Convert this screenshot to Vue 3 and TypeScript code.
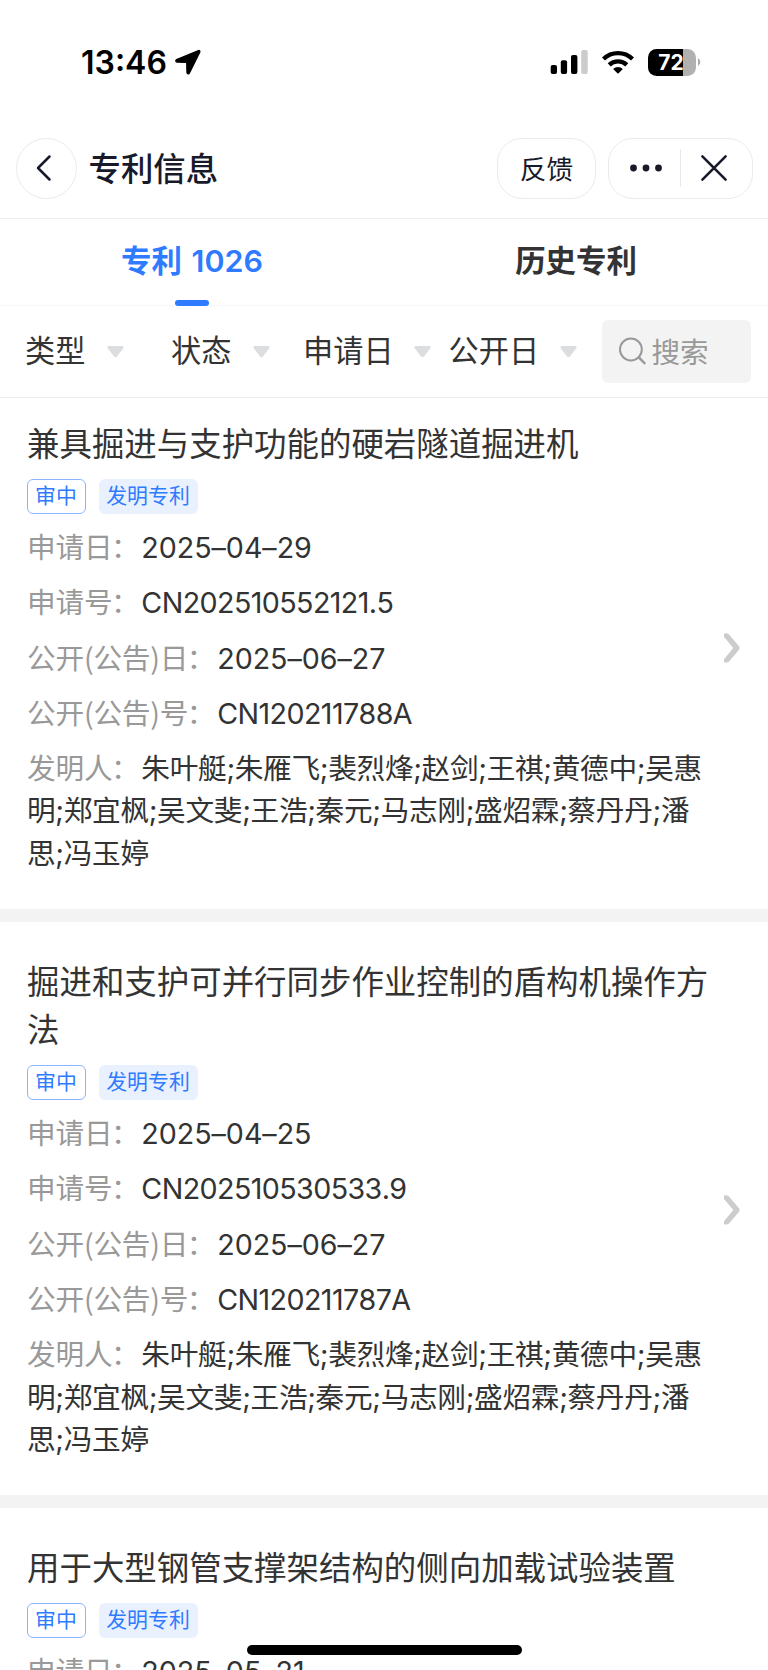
<script setup lang="ts">
interface Field {
  label: string
  value: string
  date?: boolean
}

interface Patent {
  title: string
  status: string
  kind: string
  fields: Field[]
  inventors: string[]
}

const inventors: string[] = [
  '朱叶艇', '朱雁飞', '裴烈烽', '赵剑', '王祺', '黄德中', '吴惠明', '郑宜枫', '吴文斐',
  '王浩', '秦元', '马志刚', '盛炤霖', '蔡丹丹', '潘思', '冯玉婷',
]

const filters: string[] = ['类型', '状态', '申请日', '公开日']

const patents: Patent[] = [
  {
    title: '兼具掘进与支护功能的硬岩隧道掘进机',
    status: '审中',
    kind: '发明专利',
    fields: [
      { label: '申请日', value: '2025–04–29', date: true },
      { label: '申请号', value: 'CN202510552121.5' },
      { label: '公开(公告)日', value: '2025–06–27', date: true },
      { label: '公开(公告)号', value: 'CN120211788A' },
    ],
    inventors,
  },
  {
    title: '掘进和支护可并行同步作业控制的盾构机操作方法',
    status: '审中',
    kind: '发明专利',
    fields: [
      { label: '申请日', value: '2025–04–25', date: true },
      { label: '申请号', value: 'CN202510530533.9' },
      { label: '公开(公告)日', value: '2025–06–27', date: true },
      { label: '公开(公告)号', value: 'CN120211787A' },
    ],
    inventors,
  },
  {
    title: '用于大型钢管支撑架结构的侧向加载试验装置',
    status: '审中',
    kind: '发明专利',
    fields: [{ label: '申请日', value: '2025–05–21', date: true }],
    inventors: [],
  },
]
</script>

<template>
  <div class="screen">
    <div class="status-bar">
      <span class="time">13:46</span>
      <svg class="location" width="27" height="27" viewBox="0 0 27 27">
        <path d="M24.600 1.600 2.600 10.600c-1.200.6-1 2.400.4 2.400l9 .2c.6 0 .8.200.8.800l.2 9.500c0 1.400 1.800 1.700 2.400.400L25.700 3.200c.4-1-.2-1.900-1.100-1.600Z" fill="#000" stroke="#000" stroke-width="1.400" stroke-linejoin="round" />
      </svg>
      <div class="indicators">
        <svg class="signal" width="38" height="24" viewBox="0 0 38 24">
          <rect x="0.700" y="15" width="6.300" height="9" rx="1.900" />
          <rect x="10.800" y="10.300" width="6.300" height="13.700" rx="1.900" />
          <rect x="21" y="5" width="6.400" height="19" rx="1.900" />
          <rect x="31.200" y="0" width="6.500" height="24" rx="1.900" fill="#ccc" />
        </svg>
        <svg class="wifi" width="32" height="24" viewBox="0 0 32 24">
          <g fill="none" stroke="#000" stroke-width="4.300">
            <path d="M1.500 9A20.800 20.800 0 0 1 30.500 9" />
            <path d="M7.200 14.900a12.700 12.700 0 0 1 17.600 0" />
          </g>
          <path d="M11.100 18.900a7.200 7.200 0 0 1 9.800 0L16.600 23.200q-.6.600-1.200 0Z" />
        </svg>
        <div class="battery"><span>72</span></div>
        <svg class="nub" width="3" height="8" viewBox="0 0 3 8"><path d="M0 0a4.600 4.600 0 0 1 0 8Z" fill="#aaa" /></svg>
      </div>
    </div>

    <header class="nav">
      <button class="back" aria-label="返回">
        <svg width="20" height="30" viewBox="0 0 20 30">
          <path d="M15.500 3.500 4 15l11.500 11.500" fill="none" stroke="#171a2b" stroke-width="2.500" stroke-linecap="round" stroke-linejoin="round" />
        </svg>
      </button>
      <h1>专利信息</h1>
      <button class="feedback">反馈</button>
      <div class="capsule">
        <svg class="dots" width="34" height="8" viewBox="0 0 34 8" fill="#171a2b">
          <circle cx="4.500" cy="4" r="3.400" /><circle cx="17" cy="4" r="3.400" /><circle cx="29.500" cy="4" r="3.400" />
        </svg>
        <i class="split"></i>
        <svg class="close" width="28" height="28" viewBox="0 0 28 28">
          <path d="M2.400 2.400 25.600 25.600M25.600 2.400 2.400 25.600" stroke="#171a2b" stroke-width="2.600" stroke-linecap="round" />
        </svg>
      </div>
    </header>

    <nav class="tabs">
      <a class="tab active">专利 1026</a>
      <a class="tab">历史专利</a>
    </nav>

    <div class="filters">
      <div v-for="name in filters" :key="name" class="filter">
        <span>{{ name }}</span>
        <svg width="17" height="12" viewBox="0 0 17 12">
          <path d="M1.500 0h14q1.600.4 1 1.900L10 10.400q-1.500 1.500-3 0L.5 1.900Q-.1.400 1.500 0Z" fill="#dcdddf" />
        </svg>
      </div>
      <div class="search">
        <svg width="28" height="28" viewBox="0 0 28 28" fill="none" stroke="#999" stroke-width="2">
          <circle cx="12.900" cy="12.500" r="10.900" />
          <path d="m20.600 20.200 6.600 6.600" stroke-width="2.400" />
        </svg>
        <span>搜索</span>
      </div>
    </div>

    <main class="list">
      <article v-for="p in patents" :key="p.title" class="card">
        <div class="body">
          <h2>{{ p.title }}</h2>
          <div class="tags">
            <span class="tag outline">{{ p.status }}</span>
            <span class="tag solid">{{ p.kind }}</span>
          </div>
          <p v-for="f in p.fields" :key="f.label" class="row"><span class="label">{{ f.label }}<span class="colon">：</span></span><span class="value" :class="{ date: f.date }">{{ f.value }}</span></p>
          <p v-if="p.inventors.length" class="row people"><span class="label">发明人<span class="colon">：</span></span>{{ p.inventors.join(';') }}</p>
        </div>
        <svg v-if="p.inventors.length" class="chevron" width="16" height="30" viewBox="0 0 16 30">
          <path d="M0 .6Q3-.4 5 1.600L15 13.300q1.300 1.700 0 3.400L5 28.400Q3.500 30 0 29.300v-3L9.300 15 0 4Z" fill="#ccc" />
        </svg>
      </article>
    </main>
    <div class="home-indicator"></div>
  </div>
</template>

<style>
body {
  margin: 0;
  background: #fff;
}
</style>

<style scoped>
.screen {
  position: relative;
  width: 768px;
  height: 1670px;
  overflow: hidden;
  background: #fff;
  color: #333;
  font-family: Inter, "Noto Sans CJK SC", sans-serif;
}
.status-bar {
  display: flex;
  height: 125px;
  box-sizing: border-box;
  padding: 42px 67px 0 81px;
  align-items: flex-start;
}
.time {
  width: 93px;
  color: #000;
  font-size: 32px;
  font-weight: 600;
  line-height: 42px;
}
.location {
  margin-top: 7px;
}
.indicators {
  display: flex;
  flex: 1;
  justify-content: flex-end;
  padding-top: 7px;
}
.signal {
  margin: 1px 14px 0 0;
}
.wifi {
  margin: 1px 14px 0 0;
}
.battery {
  width: 48px;
  height: 26.500px;
  border-radius: 8.500px;
  background: linear-gradient(90deg, #000 35px, #b1b1b1 35px);
  color: #fff;
  font-size: 21px;
  font-weight: 700;
  line-height: 27.500px;
  text-align: center;
}
.battery span {
  margin-right: 2px;
}
.nub {
  margin: 9px 0 0 2px;
}
.nav {
  display: flex;
  height: 94px;
  box-sizing: border-box;
  padding: 12.500px 15.500px 0 15.500px;
  border-bottom: 1px solid #efefef;
}
button {
  padding: 0;
  background: #fff;
  color: #171a2b;
  font-family: inherit;
}
.back {
  display: flex;
  width: 61px;
  height: 61px;
  align-items: center;
  justify-content: center;
  border: 1px solid #ebebeb;
  border-radius: 50%;
}
.back svg {
  margin-right: 4px;
}
h1 {
  flex: 1;
  margin: 0 0 0 12px;
  color: #171a2b;
  font-size: 32.400px;
  font-weight: 500;
  line-height: 64px;
}
.feedback {
  width: 99px;
  height: 61px;
  margin-right: 11.500px;
  padding-bottom: 2px;
  border: 1px solid #ebebeb;
  border-radius: 25px;
  font-size: 26.700px;
}
.capsule {
  display: flex;
  width: 145px;
  height: 61px;
  box-sizing: border-box;
  align-items: center;
  border: 1px solid #ebebeb;
  border-radius: 25px;
}
.dots {
  margin-left: 20px;
}
.split {
  width: 1.500px;
  height: 38px;
  margin: 0 19px 0 17px;
  background: #e8e8e8;
}
.tabs {
  display: flex;
  height: 87px;
  box-sizing: border-box;
  border-bottom: 1px solid #f6f6f6;
}
.tab {
  position: relative;
  flex: 1;
  font-size: 30.450px;
  font-weight: 600;
  line-height: 84px;
  text-align: center;
}
.active {
  color: #2f7bff;
  word-spacing: 2px;
}
.active::after {
  position: absolute;
  bottom: -1px;
  left: 175px;
  width: 34px;
  height: 6px;
  border-radius: 3px;
  background: #2f7bff;
  content: "";
}
.filters {
  position: relative;
  z-index: 1;
  display: flex;
  height: 92px;
  box-sizing: border-box;
  padding: 0 17px 1px 25px;
  align-items: center;
  border-bottom: 1px solid #ededed;
  background: #fff;
}
.filter {
  display: flex;
  width: 98.500px;
  align-items: center;
  justify-content: space-between;
  font-size: 30.200px;
  line-height: 44px;
}
.filter svg {
  margin-top: 2px;
}
.filter:nth-child(2) {
  margin-left: 47.500px;
}
.filter:nth-child(3) {
  width: 127.500px;
  margin-left: 33.500px;
}
.filter:nth-child(4) {
  width: 128px;
  margin-left: 18px;
}
.search {
  display: flex;
  width: 149px;
  height: 63px;
  box-sizing: border-box;
  margin-left: auto;
  padding-left: 16px;
  align-items: center;
  border-radius: 6px;
  background: #f3f3f3;
  color: #999;
  font-size: 28.600px;
}
.search span {
  margin: -2px 0 0 5.500px;
}
.list {
  margin-top: -14px;
}
.card {
  display: flex;
  padding: 36.800px 28px 34px 27px;
  align-items: center;
  border-bottom: 13px solid #f3f3f3;
}
.body {
  width: 685px;
}
h2 {
  margin: 0;
  font-size: 32.450px;
  font-weight: 400;
  line-height: 48px;
}
.tags {
  display: flex;
  margin: 10.500px 0 13.300px;
  gap: 13px;
}
.tag {
  height: 34.400px;
  box-sizing: border-box;
  padding-right: 1px;
  border-radius: 6px;
  color: #2f7bff;
  font-size: 20.900px;
  line-height: 32px;
  text-align: center;
}
.outline {
  width: 59px;
  border: 1px solid #8cb5ff;
}
.solid {
  width: 99px;
  background: #e9f1fe;
  line-height: 34px;
}
.row {
  margin: 0;
  font-size: 28.660px;
  line-height: 42.300px;
}
.row + .row {
  margin-top: 13px;
}
.label {
  color: #999;
  font-family: "Noto Sans CJK SC", sans-serif;
  letter-spacing: -0.200px;
  line-height: 1;
}
.colon {
  margin: 0 2px 0 -1.500px;
}
.value {
  font-kerning: none;
  letter-spacing: -0.600px;
}
.date {
  letter-spacing: -0.050px;
}
.people {
  letter-spacing: -0.300px;
}
.chevron {
  margin-left: 12px;
}
.home-indicator {
  position: absolute;
  bottom: 15px;
  left: 247px;
  width: 275px;
  height: 10px;
  border-radius: 5px;
  background: #000;
}
</style>
